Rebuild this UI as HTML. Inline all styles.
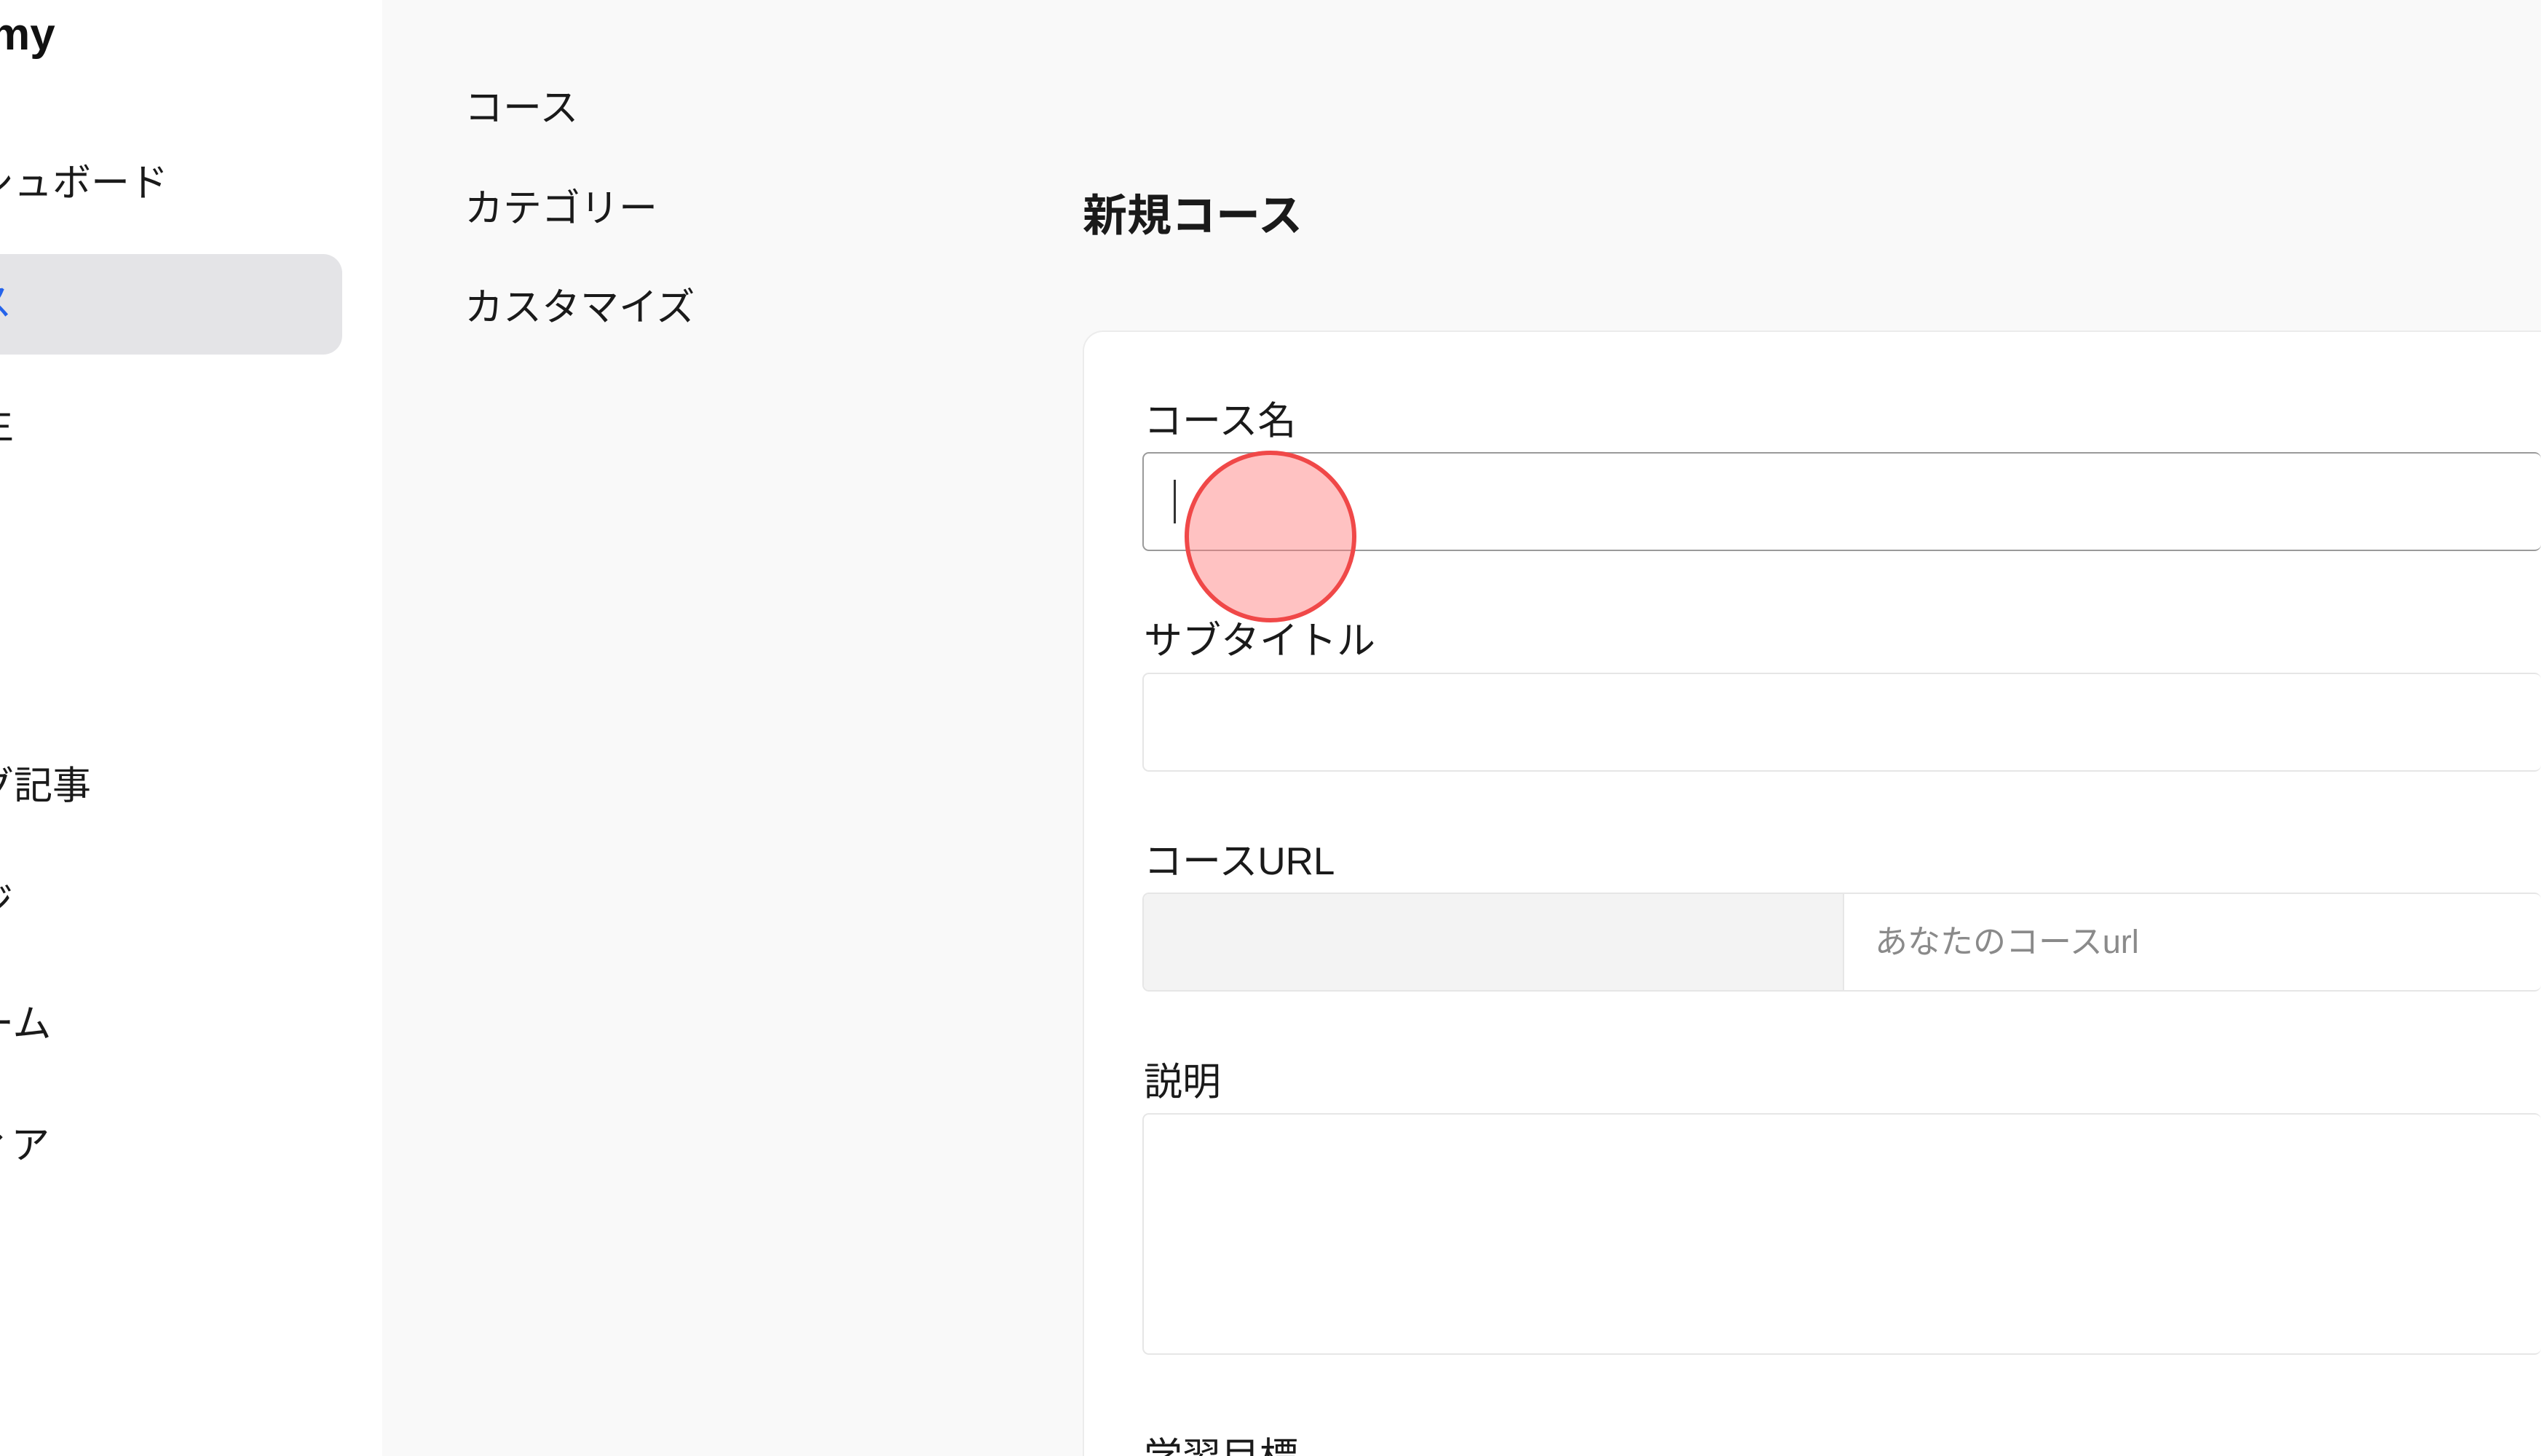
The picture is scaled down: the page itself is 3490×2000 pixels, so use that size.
<!DOCTYPE html>
<html><head><meta charset="utf-8"><style>
html,body{margin:0;padding:0;width:3490px;height:2000px;overflow:hidden;}
body{position:relative;background:#f9f9f9;font-family:"Liberation Sans","Noto Sans CJK JP",sans-serif;color:#1a1a1a;}
.abs{position:absolute;white-space:nowrap;}
.side{position:absolute;left:0;top:0;width:525px;height:2000px;background:#fff;}
.t{position:absolute;white-space:nowrap;font-size:53px;line-height:60px;height:60px;}
.inp{position:absolute;background:#fff;border:2px solid #e6e6e6;border-radius:9px;box-sizing:border-box;}
</style></head><body>
<div class="side"></div>
<div class="abs" style="left:-200px;width:255px;text-align:right;top:6px;font-size:62px;line-height:84px;font-weight:bold;color:#111;font-family:'Liberation Sans',sans-serif;">Academy</div>
<div class="abs" style="left:0;top:349px;width:470px;height:138px;background:#e4e4e7;border-radius:0 26px 26px 0;"></div>
<div class="t" style="left:-140px;top:222px;">ダッシュボード</div>
<div class="t" style="left:-140px;top:386px;color:#2563eb;">コース</div>
<div class="t" style="left:-140px;top:555px;">受講生</div>
<div class="t" style="left:-140px;top:1050px;">ブログ記事</div>
<div class="t" style="left:-140px;top:1210px;">ページ</div>
<div class="t" style="left:-140px;top:1377px;">フォーム</div>
<div class="t" style="left:-140px;top:1544px;">メディア</div>

<div class="t" style="left:638px;top:119px;">コース</div>
<div class="t" style="left:638px;top:257px;">カテゴリー</div>
<div class="t" style="left:638px;top:393px;">カスタマイズ</div>

<div class="t" style="left:1487px;top:262px;font-size:61px;line-height:68px;height:68px;font-weight:bold;">新規コース</div>

<div class="abs" style="left:1487px;top:454px;width:2003px;height:1546px;background:#fff;border:2px solid #ececec;border-right:none;border-bottom:none;border-radius:28px 0 0 0;box-sizing:border-box;"></div>

<div class="t" style="left:1571px;top:549px;">コース名</div>
<div class="inp" style="left:1569px;top:621px;width:1921px;height:136px;border-color:#9a9a9a;border-right:none;"></div>
<div class="abs" style="left:1612px;top:659px;width:3px;height:60px;background:#333;"></div>
<div class="abs" style="left:1627px;top:619px;width:236px;height:236px;border-radius:50%;background:rgba(255,120,120,0.45);border:6px solid #f04848;box-sizing:border-box;"></div>

<div class="t" style="left:1571px;top:851px;">サブタイトル</div>
<div class="inp" style="left:1569px;top:924px;width:1921px;height:136px;border-right:none;"></div>

<div class="t" style="left:1571px;top:1154px;">コースURL</div>
<div class="inp" style="left:1569px;top:1226px;width:1921px;height:136px;border-right:none;"></div>
<div class="abs" style="left:1571px;top:1228px;width:960px;height:132px;background:#f3f3f3;border-right:2px solid #e6e6e6;border-radius:7px 0 0 7px;"></div>
<div class="t" style="left:2575px;top:1266px;font-size:45px;line-height:56px;color:#8a8a8a;">あなたのコースurl</div>

<div class="t" style="left:1571px;top:1457px;">説明</div>
<div class="inp" style="left:1569px;top:1529px;width:1921px;height:332px;border-right:none;"></div>

<div class="t" style="left:1571px;top:1972px;">学習目標</div>
</body></html>
